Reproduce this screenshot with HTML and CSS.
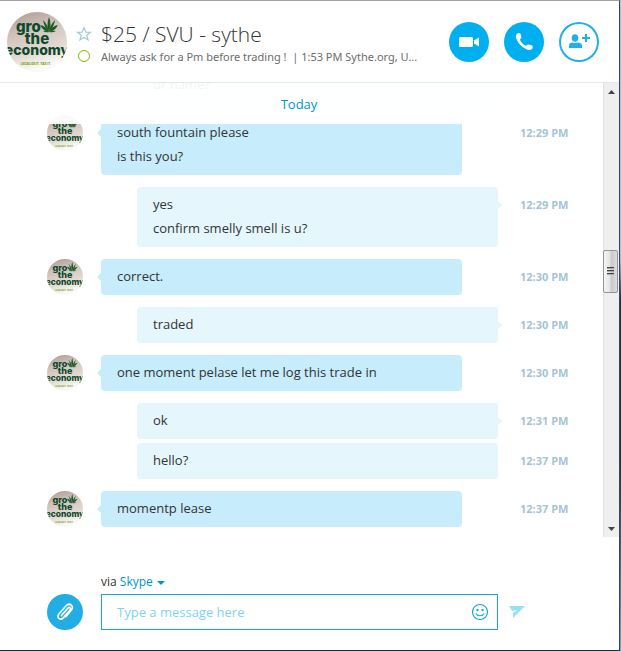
FILE: index.html
```html
<!DOCTYPE html>
<html lang="en">
<head>
<meta charset="utf-8">
<title>$25 / SVU - sythe</title>
<link rel="stylesheet" href="styles.css">
</head>
<body>
<svg class="defs" aria-hidden="true">
  <defs>
    <linearGradient id="paper" x1="0" y1="0" x2="0.3" y2="1">
      <stop offset="0" stop-color="#a8988f"/>
      <stop offset="0.35" stop-color="#cdc0b9"/>
      <stop offset="0.75" stop-color="#e4dad4"/>
      <stop offset="1" stop-color="#fbf8f6"/>
    </linearGradient>
    <clipPath id="round"><circle cx="30" cy="30" r="30"/></clipPath>
    <symbol id="avatar" viewBox="0 0 60 60">
      <g clip-path="url(#round)">
        <rect width="60" height="60" fill="url(#paper)"/>
        <g fill="#0d4a2c" class="poster">
          <text x="9" y="20" font-size="15">gro</text>
          <text x="30" y="32" font-size="15" text-anchor="middle">the</text>
          <text x="30" y="43" font-size="14" text-anchor="middle">economy</text>
        </g>
        <g fill="#1c5a26">
          <path d="M42 20q-3-7 0-15q3 8 0 15z"/>
          <path d="M42 20q-5-5-6-12q5 5 6 12z"/>
          <path d="M42 20q1-7 6-12q-1 7-6 12z"/>
          <path d="M42 20q-6-1-9-7q6 1 9 7z"/>
          <path d="M42 20q3-6 9-7q-3 6-9 7z"/>
          <path d="M42 20q-3 1-6-1q3-1 6 1z"/>
          <path d="M42 20q3-2 7-1q-3 2-7 1z"/>
        </g>
        <text class="poster" x="29" y="53" font-size="3" text-anchor="middle" fill="#6aa517">LEGALIZE IT. TAX IT.</text>
      </g>
    </symbol>
  </defs>
</svg>
<main class="window">
  <header class="header">
    <svg class="avatar-large" role="img" aria-label="Contact picture"><use href="#avatar"/></svg>
    <div class="marks">
      <button class="plain" aria-label="Add to favorites"><svg width="16" height="16" viewBox="0 0 16 16"><path d="M8 1.600l1.800 4.500 4.700.2-3.700 3 1.300 4.700L8 11.400 3.900 14l1.300-4.700-3.700-3 4.700-.2z" fill="none" stroke="#a5c9dc" stroke-width="1.200"/></svg></button>
      <span class="presence"></span>
    </div>
    <div class="who">
      <h1>$25 / SVU - sythe</h1>
      <p>Always ask for a Pm before trading !&nbsp; | 1:53 PM Sythe.org, U...</p>
    </div>
    <div class="actions">
      <button class="round" aria-label="Video call"><svg width="40" height="40" viewBox="0 0 40 40"><rect x="10" y="15" width="14" height="10" rx="1.500" fill="#fff"/><path d="M25 18.500l5-3v9l-5-3z" fill="#fff"/></svg></button>
      <button class="round" aria-label="Call"><svg width="40" height="40" viewBox="0 0 40 40"><path d="M12.500 12.500c1-1.300 2.500-1.800 3.500-1.200.8.500 1.400 3 1.300 4.200-.1 1-1.300 1.300-1.200 2.200.2 1.800 3.800 5.500 5.600 5.900 1 .2 1.500-1 2.400-1.100 1.200-.1 4 .8 4.500 1.700.6 1-.1 2.600-1.400 3.300-2.300 1.300-6.500-.4-10-3.800-3.900-3.800-6.500-8.800-4.700-11.200z" fill="#fff"/></svg></button>
      <button class="round outline" aria-label="Add people"><svg width="40" height="40" viewBox="0 0 40 40" fill="#1fb0e8"><ellipse cx="16" cy="16" rx="3.300" ry="3.800"/><path d="M10 26v-2.500c0-2 1.500-2.700 4-3 1 .8 3 .8 4 0 3 .3 5 1 5 3V26z"/><path d="M26 12h2v3h3v2h-3v3h-2v-3h-3v-2h3z"/></svg></button>
    </div>
  </header>

  <section class="history">
    <div class="log">
      <article class="row out"><p class="bubble">ur name?</p></article>
      <article class="row in">
        <svg class="avatar" role="img" aria-label="Contact picture"><use href="#avatar"/></svg>
        <p class="bubble tail">south fountain please<br>is this you?</p><time>12:29 PM</time>
      </article>
      <article class="row out"><p class="bubble tail">yes<br>confirm smelly smell is u?</p><time>12:29 PM</time></article>
      <article class="row in">
        <svg class="avatar" role="img" aria-label="Contact picture"><use href="#avatar"/></svg>
        <p class="bubble tail">correct.</p><time>12:30 PM</time>
      </article>
      <article class="row out"><p class="bubble tail">traded</p><time>12:30 PM</time></article>
      <article class="row in">
        <svg class="avatar" role="img" aria-label="Contact picture"><use href="#avatar"/></svg>
        <p class="bubble tail">one moment pelase let me log this trade in</p><time>12:30 PM</time>
      </article>
      <article class="row out"><p class="bubble tail">ok</p><time>12:31 PM</time></article>
      <article class="row out follow"><p class="bubble">hello?</p><time>12:37 PM</time></article>
      <article class="row in">
        <svg class="avatar" role="img" aria-label="Contact picture"><use href="#avatar"/></svg>
        <p class="bubble tail">momentp lease</p><time>12:37 PM</time>
      </article>
    </div>
    <div class="day">Today</div>
    <div class="scroll">
      <svg width="15" height="16" viewBox="0 0 15 16"><path d="M4 11l3.500-4 3.500 4z" fill="#444"/></svg>
      <div class="thumb"><i></i><i></i><i></i></div>
      <svg width="15" height="16" viewBox="0 0 15 16"><path d="M4 6l3.500 4L11 6z" fill="#444"/></svg>
    </div>
  </section>

  <form class="composer">
    <div class="via">via <button type="button" class="plain">Skype<span class="caret"></span></button></div>
    <button type="button" class="attach" aria-label="Attach a file"><svg width="36" height="36" viewBox="0 0 36 36"><path d="M14.500 21.500l6.300-7.300c1.600-1.800 3.700.1 2.200 1.900l-6.500 7.500c-3 3.400-7.500-.2-4.600-3.600l7-8c3.600-4 8.800.2 5.400 4.300l-5.500 6.400" fill="none" stroke="#fff" stroke-width="1.700" stroke-linecap="round"/></svg></button>
    <div class="field">
      <input type="text" placeholder="Type a message here" aria-label="Message">
      <button type="button" class="plain" aria-label="Emoticons"><svg width="18" height="18" viewBox="0 0 18 18" fill="none" stroke="#14a8e0" stroke-width="1.200"><circle cx="9" cy="9" r="7.500"/><path d="M5 10.500c1.500 3 6.500 3 8 0"/><path d="M5.500 7h2M10.500 7h2" stroke-width="1.800"/></svg></button>
    </div>
    <button type="submit" class="plain send" aria-label="Send"><svg width="18" height="14" viewBox="0 0 18 14"><path d="M1 1h16L5 13V8l4-3-5 1z" fill="#9adff8"/></svg></button>
  </form>
</main>
</body>
</html>
```
FILE: styles.css
```css
* { box-sizing: border-box; }
html { background: linear-gradient(#a9c0d6, #a9c0d6 40%, #1e2a36 46%, #1e2a36 70%, #7f9fc0); }
body {
  margin: 0;
  color: #333;
  font: 12px/24px "Open Sans", "Noto Sans", sans-serif;
}
h1, p { margin: 0; font-weight: 400; }
button { padding: 0; border: 0; font: inherit; cursor: pointer; }
svg { display: block; flex: none; }
.defs { position: absolute; width: 0; height: 0; }
.poster { font-family: Inter, sans-serif; font-weight: 800; }
.plain { background: none; color: #0095cc; }

.window {
  display: flex;
  flex-direction: column;
  height: 100vh;
  margin-right: 1px;
  border-top: 1px solid #a0a0a4;
  border-right: 1px solid #34485c;
  border-bottom: 1px solid #1e2a36;
  background: #fff;
}

.header {
  display: flex;
  align-items: center;
  height: 82px;
  padding: 0 20px 0 7px;
  border-bottom: 1px solid #dfe9f0;
}
.avatar-large { width: 60px; height: 60px; }
.marks {
  display: flex;
  flex-direction: column;
  align-items: center;
  gap: 8px;
  width: 34px;
  padding-top: 4px;
}
.presence { width: 12px; height: 12px; border: 1px solid #7fba00; border-radius: 50%; }
.who { flex: 1; min-width: 0; padding-top: 2px; }
.who h1 { font-weight: 300; font-size: 21px; line-height: 28px; }
.who p { color: #6c6c6c; font-family: "Noto Sans", sans-serif; font-size: 11px; line-height: 18px; white-space: nowrap; }
.actions { display: flex; gap: 15px; }
.round { width: 40px; height: 40px; border-radius: 50%; background: #00aff0; }
.outline { background: #fff; box-shadow: inset 0 0 0 2px #1fb0e8; }

.history { position: relative; display: flex; flex: 1; min-height: 0; }
.log {
  display: flex;
  flex: 1;
  flex-direction: column;
  justify-content: flex-end;
  gap: 12px;
  overflow: hidden;
  padding: 0 35px 10px 47px;
}
.row { display: flex; flex: none; font-size: 13px; }
.row.follow { margin-top: -8px; }
.avatar { width: 36px; height: 36px; margin-right: 18px; }
.bubble { position: relative; flex: 1; padding: 5px 16px 7px; border-radius: 4px; }
.in .bubble { margin-right: 58px; background: #c7ecfc; }
.out .bubble { margin: 0 22px 0 90px; background: #e5f6fd; }
.tail::after {
  content: "";
  position: absolute;
  top: 14px;
  border: 4px solid transparent;
}
.in .tail::after { right: 100%; border-left-width: 0; border-right-color: #c7ecfc; }
.out .tail::after { left: 100%; border-right-width: 0; border-left-color: #e5f6fd; }
time { width: 48px; padding-top: 6px; color: #a5c4d6; font-size: 11px; font-weight: 700; white-space: nowrap; }
.out:first-child .bubble { margin-right: 70px; }

.day {
  position: absolute;
  top: 0;
  right: 16px;
  left: 0;
  height: 41px;
  padding-top: 9px;
  padding-right: 5px;
  background: rgba(255, 255, 255, 0.94);
  color: #0095cc;
  font-size: 13px;
  text-align: center;
}
.scroll {
  display: flex;
  flex-direction: column;
  width: 16px;
  border-left: 1px solid #e0e0e0;
  background: #efefef;
}
.thumb {
  display: flex;
  flex-direction: column;
  align-items: center;
  gap: 1px;
  height: 43px;
  margin: 151px 1px auto -1px;
  padding-top: 16px;
  border: 1px solid #949494;
  border-radius: 2px;
  background: linear-gradient(90deg, #f5f5f5, #e4e4e6 45%, #c9c9cd 55%, #dcdcdf);
}
.thumb i { width: 7px; height: 2px; border-top: 1px solid #444; background: #aaa; }

.composer {
  display: grid;
  grid-template-columns: 36px 1fr 18px;
  column-gap: 18px;
  align-items: center;
  padding: 33px 93px 20px 47px;
}
.via { grid-column: 2 / 4; }
.caret {
  display: inline-block;
  margin-left: 4px;
  border: 4px solid transparent;
  border-top-color: #0095cc;
  border-bottom: 0;
  vertical-align: middle;
}
.attach { width: 36px; height: 36px; border-radius: 50%; background: #22ade4; }
.field {
  display: flex;
  align-items: center;
  height: 36px;
  margin-right: -8px;
  padding: 0 8px 0 15px;
  border: 1px solid #14a8e0;
}
.field input { flex: 1; min-width: 0; padding: 0; border: 0; outline: 0; background: none; font: inherit; font-size: 13px; }
.field input::placeholder { color: #7fd3f3; opacity: 1; }
```
